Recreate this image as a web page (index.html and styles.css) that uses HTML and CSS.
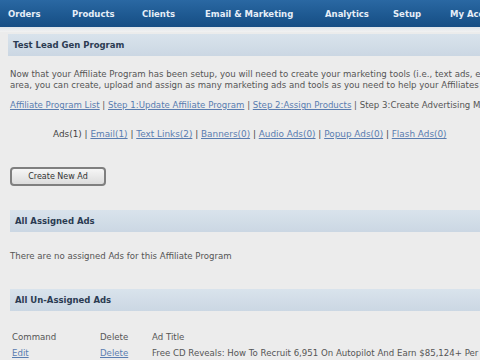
FILE: index.html
```html
<!DOCTYPE html>
<html lang="en">
<head>
  <meta charset="UTF-8">
  <title>Affiliate Program</title>
  <link rel="stylesheet" href="styles.css">
</head>
<body>
  <div class="topnav">
    <a href="#">Orders</a>
    <a href="#">Products</a>
    <a href="#">Clients</a>
    <a href="#">Email &amp; Marketing</a>
    <a href="#">Analytics</a>
    <a href="#">Setup</a>
    <a href="#">My Account</a>
  </div>
  <div class="strip"></div>

  <div class="content">
    <div class="section-head">Test Lead Gen Program</div>
    <p class="intro">Now that your Affiliate Program has been setup, you will need to create your marketing tools (i.e., text ads, email ads, etc.) In this<br>area, you can create, upload and assign as many marketing ads and tools as you need to help your Affiliates sell more.</p>

    <div class="steps">
      <a href="#">Affiliate Program List</a> | <a href="#">Step 1:Update Affiliate Program</a> | <a href="#">Step 2:Assign Products</a> | Step 3:Create Advertising Materials
    </div>

    <div class="adtypes">
      Ads(1) | <a href="#">Email(1)</a> | <a href="#">Text Links(2)</a> | <a href="#">Banners(0)</a> | <a href="#">Audio Ads(0)</a> | <a href="#">Popup Ads(0)</a> | <a href="#">Flash Ads(0)</a>
    </div>

    <button class="btn">Create New Ad</button>

    <div class="section-head">All Assigned Ads</div>
    <p class="note">There are no assigned Ads for this Affiliate Program</p>

    <div class="section-head">All Un-Assigned Ads</div>
    <table class="ads">
      <colgroup>
        <col class="c-cmd">
        <col class="c-del">
        <col>
      </colgroup>
      <tr>
        <th>Command</th>
        <th>Delete</th>
        <th>Ad Title</th>
      </tr>
      <tr>
        <td><a href="#">Edit</a></td>
        <td><a href="#">Delete</a></td>
        <td>Free CD Reveals: How To Recruit 6,951 On Autopilot And Earn $85,124+ Per Month</td>
      </tr>
    </table>
  </div>
</body>
</html>
```

FILE: styles.css
```css
body {
  margin: 0;
  padding: 0;
  background-color: #ececec;
  font-family: "DejaVu Sans", Verdana, sans-serif;
  font-size: 8.6px;
  color: #555;
  overflow: hidden;
  width: 480px;
  height: 360px;
}

.topnav {
  height: 27px;
  background: linear-gradient(#2a68a3, #1d5890 60%, #174d84);
  display: flex;
  align-items: center;
  padding-left: 8px;
  white-space: nowrap;
  overflow: hidden;
}

.topnav a {
  flex-shrink: 0;
  color: #e6eef8;
  font-weight: bold;
  font-size: 8.5px;
  text-decoration: none;
}

.topnav a:nth-child(1) { width: 64px; }
.topnav a:nth-child(2) { width: 70px; }
.topnav a:nth-child(3) { width: 63px; }
.topnav a:nth-child(4) { width: 120px; }
.topnav a:nth-child(5) { width: 68px; }
.topnav a:nth-child(6) { width: 57px; }

.strip {
  height: 5px;
  background: linear-gradient(#dfe4ea, #f2f2f2);
}

.content {
  padding-left: 8px;
  white-space: nowrap;
}

.section-head {
  height: 22px;
  line-height: 22px;
  padding-left: 5px;
  background: linear-gradient(#d9e3ec, #cbd7e3);
  color: #2b3b52;
  font-weight: bold;
  font-size: 8.5px;
  margin-top: 2px;
}

.intro {
  margin: 13px 0 0 2px;
  line-height: 11px;
}

.steps {
  margin: 9px 0 0 2px;
}

a {
  color: #5a7db0;
}

.adtypes {
  margin: 19px 0 0 45px;
  font-size: 8.9px;
  color: #444;
}

.btn {
  display: block;
  margin: 28px 0 0 2px;
  width: 96px;
  height: 19px;
  font-family: "DejaVu Sans", Verdana, sans-serif;
  font-size: 8px;
  color: #333;
  background: linear-gradient(#f6f6f6, #dcdcdc);
  border: 2px solid #7f7f7f;
  border-radius: 4px;
  padding: 0;
}

.btn + .section-head {
  margin-top: 24px;
  margin-left: 2px;
}

.note {
  margin: 19px 0 0 2px;
}

.note + .section-head {
  margin-top: 28px;
  margin-left: 2px;
}

.ads {
  border-collapse: collapse;
  table-layout: fixed;
  width: 700px;
  margin: 21px 0 0 2px;
}

.ads th {
  font-weight: normal;
  text-align: left;
  color: #555;
  padding: 0 0 6px 2px;
}

.ads td {
  padding: 0 0 0 2px;
}

.c-cmd { width: 88px; }
.c-del { width: 52px; }
```
